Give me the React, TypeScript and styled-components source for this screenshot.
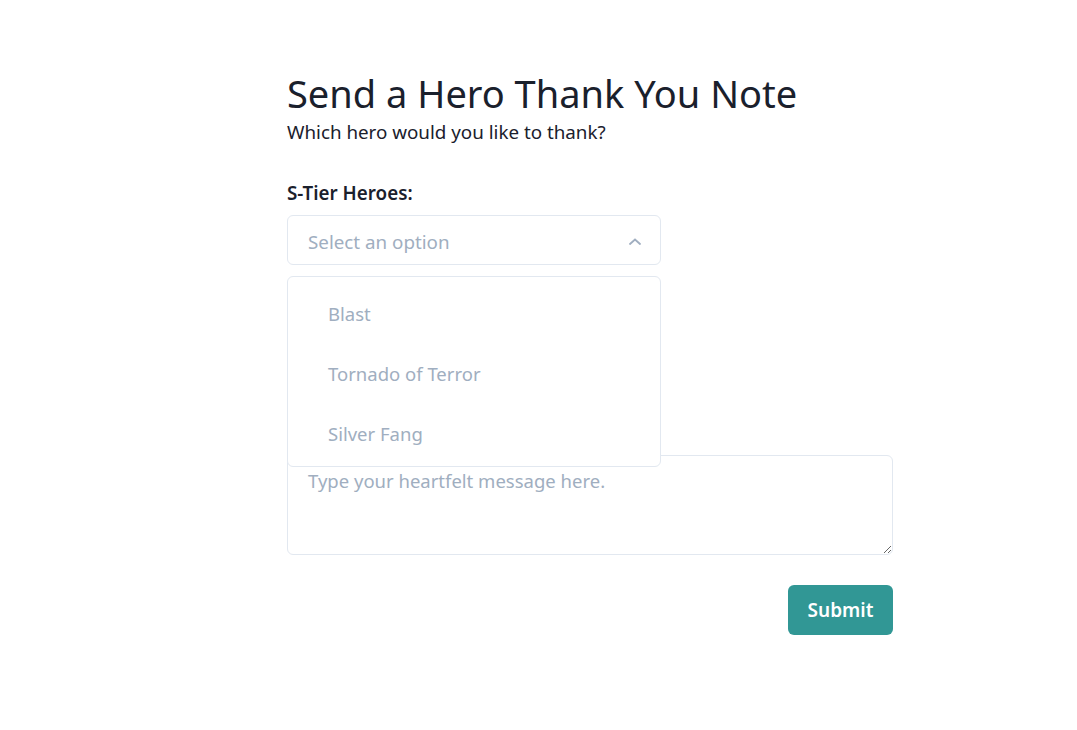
import styled, {createGlobalStyle} from 'styled-components';

const GlobalStyle = createGlobalStyle`
    body {
        margin: 0;
        background: #ffffff;
        font-family: "Segoe UI", "Noto Sans", "Liberation Sans", sans-serif;
        color: #1a202c;
    }
`;

const Page = styled.div`
    display: flex;
    padding: 70px 0 0 287px;
`;
const Form = styled.form`
    width: 606px;
    display: flex;
    flex-direction: column;
`;
const Title = styled.h1`
    margin: 0;
    font-size: 38px;
    font-weight: 400;
    line-height: 46px;
`;
const Subtitle = styled.p`
    margin: 3px 0 0;
    font-size: 18.8px;
    line-height: 26px;
`;
const Label = styled.label`
    display: block;
    margin: 36px 0 10px;
    font-size: 18.8px;
    font-weight: 600;
    line-height: 24px;
`;
const SelectWrap = styled.div`
    position: relative;
    width: 374px;
`;
const SelectBox = styled.div`
    box-sizing: border-box;
    height: 50px;
    display: flex;
    align-items: center;
    justify-content: space-between;
    padding: 3px 19px 0 20px;
    border: 1px solid #e2e8f0;
    border-radius: 6px;
    font-size: 18.8px;
    color: #a0aec0;
`;
const Menu = styled.ul`
    position: absolute;
    top: 61px;
    left: 0;
    right: 0;
    z-index: 2;
    margin: 0;
    padding: 6px 0 3px;
    list-style: none;
    background: #ffffff;
    border: 1px solid #e2e8f0;
    border-radius: 6px;
`;
const Option = styled.li`
    height: 60px;
    display: flex;
    align-items: center;
    padding-left: 40px;
    font-size: 18.5px;
    color: #a0aec0;
`;
const Message = styled.textarea`
    box-sizing: border-box;
    width: 100%;
    height: 100px;
    margin-top: 190px;
    padding: 12px 20px;
    border: 1px solid #e2e8f0;
    border-radius: 6px;
    font-family: inherit;
    font-size: 18.5px;
    color: #1a202c;
    &::placeholder {
        color: #a0aec0;
    }
`;
const Actions = styled.div`
    display: flex;
    justify-content: flex-end;
    margin-top: 30px;
`;
const Submit = styled.button`
    width: 105px;
    height: 50px;
    border: none;
    border-radius: 6px;
    background: #319795;
    color: #ffffff;
    font-family: inherit;
    font-size: 19px;
    font-weight: 600;
`;

function Chevron(){
    return (
        <svg width="12" height="7" viewBox="0 0 12 7" fill="none">
            <path d="M1 6L6 1.5L11 6" stroke="#a0aec0" strokeWidth="1.8" strokeLinecap="round"/>
        </svg>
    );
}

const heroes = ['Blast', 'Tornado of Terror', 'Silver Fang'];

function App(){
    return (
        <>
            <GlobalStyle/>
            <Page>
                <Form onSubmit={e => e.preventDefault()}>
                    <Title>Send a Hero Thank You Note</Title>
                    <Subtitle>Which hero would you like to thank?</Subtitle>
                    <Label>S-Tier Heroes:</Label>
                    <SelectWrap>
                        <SelectBox>
                            <span>Select an option</span>
                            <Chevron/>
                        </SelectBox>
                        <Menu>
                            {heroes.map(hero => <Option key={hero}>{hero}</Option>)}
                        </Menu>
                    </SelectWrap>
                    <Message placeholder="Type your heartfelt message here."/>
                    <Actions>
                        <Submit type="submit">Submit</Submit>
                    </Actions>
                </Form>
            </Page>
        </>
    );
}

export default App;
